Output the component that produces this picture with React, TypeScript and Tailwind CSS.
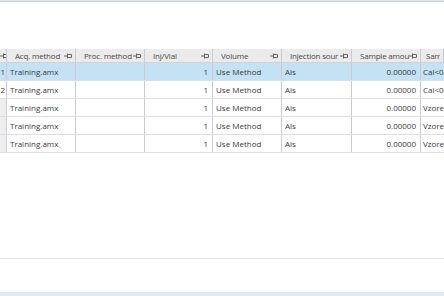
// Sequence grid - scrolled injection table

const Pin = () => (
  <svg width="8" height="6" viewBox="0 0 8 6" className="shrink-0">
    <path d="M0 3H3M3.5 0.5V5.5M3.5 1.5H7.5V4.5H3.5" fill="none" stroke="#666" strokeWidth="1" />
  </svg>
);

const headers = ["Acq. method", "Proc. method", "Inj/Vial", "Volume", "Injection sour", "Sample amou", "Sam"];

const rows = [
  { n: "1", sample: "Cal<00", selected: true, empty: false },
  { n: "2", sample: "Cal<00", selected: false, empty: false },
  { n: "", sample: "Vzorek", selected: false, empty: true },
  { n: "", sample: "Vzorek", selected: false, empty: true },
  { n: "", sample: "Vzorek", selected: false, empty: true },
];

const cols = "grid grid-cols-[7px_69px_69px_68px_69px_70px_69px_23px]";

export default function App() {
  return (
    <div className="w-[444px] h-[296px] bg-white flex flex-col overflow-hidden text-[8px] text-[#3a3a3a] font-['Open_Sans',sans-serif]">
      {/* top strip */}
      <div className="h-[2px] bg-[#d9e5ef] border-b border-[#c9d6e0]" />
      <div className="h-[47px]" />

      {/* header */}
      <div className={`${cols} h-[14px] bg-[#ebebeb] border-b border-[#d2d2d2] text-[#4a4a4a] tracking-[-0.2px]`}>
        <div className="flex items-center justify-start border-r border-[#c8cad8] overflow-hidden">
          <Pin />
        </div>
        {headers.map((h, i) => (
          <div
            key={i}
            className={`flex items-center ${i < 6 ? "pl-[8px]" : "pl-[5px]"} pr-[3px] border-r border-[#c8cad8] overflow-hidden whitespace-nowrap`}
          >
            <span className="flex-1 overflow-hidden">{h}</span>
            {i < 6 && <Pin />}
          </div>
        ))}
      </div>

      {/* rows */}
      {rows.map((r, i) => {
        const bg = r.selected ? "bg-[#c5e1f4]" : "bg-white";
        const cell = "flex items-center border-r border-[#c8cad8] overflow-hidden whitespace-nowrap";
        return (
          <div key={i} className={`${cols} h-[18px] border-b border-[#dedede] ${bg}`}>
            <div className={`${cell} justify-end pr-[1px] ${r.empty ? "bg-[#eeeeee]" : ""}`}>{r.n}</div>
            <div className={`${cell} pl-[3px]`}>Training.amx</div>
            <div className={cell} />
            <div className={`${cell} justify-end pr-[4px]`}>1</div>
            <div className={`${cell} pl-[3px]`}>Use Method</div>
            <div className={`${cell} pl-[3px]`}>Als</div>
            <div className={`${cell} justify-end pr-[4px]`}>0.00000</div>
            <div className={`${cell} pl-[2px] border-r-0`}>{r.sample}</div>
          </div>
        );
      })}

      <div className="flex-1" />
      <div className="h-[34px] border-t border-[#e2e2e2]" />
      <div className="h-[4px] bg-[#dce8f2]" />
    </div>
  );
}
